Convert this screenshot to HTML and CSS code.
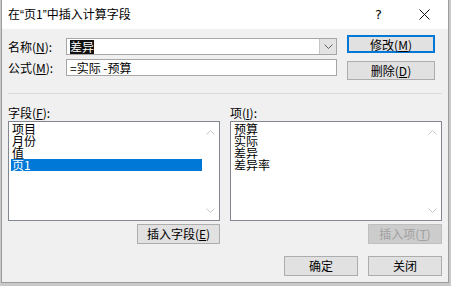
FILE: index.html
```html
<!DOCTYPE html>
<html lang="zh-CN">
<head>
    <meta charset="UTF-8">
    <title>插入计算字段</title>
    <link rel="stylesheet" href="styles.css">
</head>
<body>
    <div class="dialog">
        <div class="titlebar">
            <div class="caption">在<span class="q">“</span>页1<span class="q">”</span>中插入计算字段</div>
            <div class="help">?</div>
            <div class="close">
                <svg width="11" height="11" viewBox="0 0 11 11">
                    <path d="M0.5 0.5 L10.5 10.5 M10.5 0.5 L0.5 10.5" stroke="#111" stroke-width="1" fill="none"/>
                </svg>
            </div>
        </div>

        <div class="top">
            <div class="form">
                <div class="row">
                    <label>名称(<u>N</u>):</label>
                    <div class="combo">
                        <span class="sel">差异</span>
                        <div class="drop">
                            <svg width="9" height="5" viewBox="0 0 9 5">
                                <path d="M0.5 0.5 L4.5 4.5 L8.5 0.5" stroke="#606060" fill="none"/>
                            </svg>
                        </div>
                    </div>
                </div>
                <div class="row">
                    <label>公式(<u>M</u>):</label>
                    <div class="field">=实际 -预算</div>
                </div>
            </div>
            <div class="side">
                <button class="btn default">修改(<u>M</u>)</button>
                <button class="btn tall">删除(<u>D</u>)</button>
            </div>
        </div>

        <div class="sep"></div>

        <div class="lists">
            <div class="col">
                <div class="cap">字段(<u>F</u>):</div>
                <div class="listbox">
                    <div class="items">
                        <div class="item">项目</div>
                        <div class="item">月份</div>
                        <div class="item">值</div>
                        <div class="item active">页1</div>
                    </div>
                    <div class="scroll">
                        <svg width="9" height="5" viewBox="0 0 9 5"><path d="M0.5 4.5 L4.5 0.5 L8.5 4.5" stroke="#c6c6c6" fill="none"/></svg>
                        <svg width="9" height="5" viewBox="0 0 9 5"><path d="M0.5 0.5 L4.5 4.5 L8.5 0.5" stroke="#c6c6c6" fill="none"/></svg>
                    </div>
                </div>
                <div class="under">
                    <button class="btn insert-field">插入字段(<u>E</u>)</button>
                </div>
            </div>
            <div class="col">
                <div class="cap">项(<u>I</u>):</div>
                <div class="listbox">
                    <div class="items">
                        <div class="item">预算</div>
                        <div class="item">实际</div>
                        <div class="item">差异</div>
                        <div class="item">差异率</div>
                    </div>
                    <div class="scroll">
                        <svg width="9" height="5" viewBox="0 0 9 5"><path d="M0.5 4.5 L4.5 0.5 L8.5 4.5" stroke="#c6c6c6" fill="none"/></svg>
                        <svg width="9" height="5" viewBox="0 0 9 5"><path d="M0.5 0.5 L4.5 4.5 L8.5 0.5" stroke="#c6c6c6" fill="none"/></svg>
                    </div>
                </div>
                <div class="under">
                    <button class="btn disabled">插入项(<u>T</u>)</button>
                </div>
            </div>
        </div>

        <div class="footer">
            <button class="btn">确定</button>
            <button class="btn">关闭</button>
        </div>
    </div>
</body>
</html>
```

FILE: styles.css
```css
body {
    margin: 0;
    padding: 0 0 0 1px;
    background-color: #c9c9c9;
    font-family: "Noto Sans CJK SC", "Liberation Sans", sans-serif;
    font-size: 12px;
    color: #000;
}

.dialog {
    width: 446px;
    height: 282px;
    border: 1px solid #9c9c9c;
    border-top: none;
    background-color: #f0f0f0;
    box-sizing: content-box;
}

.titlebar {
    height: 29px;
    background-color: #fff;
    display: flex;
    align-items: center;
    padding-left: 6px;
}

.caption {
    flex: 1;
    font-size: 12px;
    line-height: 14px;
}

.caption .q {
    font-family: "Liberation Sans", sans-serif;
}

.help {
    width: 12px;
    font-size: 13px;
    margin-right: 32px;
    font-family: "DejaVu Sans", sans-serif;
}

.close {
    width: 11px;
    height: 11px;
    margin-right: 18px;
    display: flex;
}

u {
    text-decoration: underline;
    text-underline-offset: 1px;
}

.top {
    display: flex;
    padding: 6px 0 0 6px;
    height: 45px;
}

.form {
    width: 329px;
    padding-top: 3px;
    display: flex;
    flex-direction: column;
    gap: 4px;
}

.row {
    display: flex;
    height: 17px;
    align-items: center;
}

.row label {
    width: 58px;
    line-height: 17px;
}

.combo, .field {
    flex: 1;
    height: 17px;
    box-sizing: border-box;
    border: 1px solid #a6a6a6;
    background: #fff;
    display: flex;
    align-items: center;
    padding-left: 3px;
    line-height: 15px;
}

.combo {
    position: relative;
}

.sel {
    background-color: #111;
    color: #fff;
    line-height: 14px;
}

.drop {
    position: absolute;
    right: 0;
    top: 0;
    width: 16px;
    height: 15px;
    background-color: #e3e3e3;
    border-left: 1px solid #c4c4c4;
    display: flex;
    align-items: center;
    justify-content: center;
}

.side {
    margin-left: 10px;
    display: flex;
    flex-direction: column;
    gap: 8px;
}

.btn {
    font-family: "Noto Sans CJK SC", "Liberation Sans", sans-serif;
    font-size: 12px;
    height: 20px;
    width: 74px;
    padding: 0;
    margin: 0;
    background-color: #e1e1e1;
    border: 1px solid #adadad;
    color: #000;
    line-height: 16px;
}

.side .btn {
    width: 88px;
    height: 18px;
}

.side .btn.tall {
    height: 19px;
}

.btn.default {
    border: 2px solid #0078d7;
}

.btn.disabled {
    color: #a0a0a0;
    background-color: #cccccc;
    border-color: #bfbfbf;
}

.insert-field {
    width: 83px;
}

.sep {
    margin: 13px 6px 0 6px;
    height: 1px;
    background-color: #d9d9d9;
}

.lists {
    display: flex;
    gap: 10px;
    padding: 12px 0 0 6px;
}

.col {
    width: 212px;
    display: flex;
    flex-direction: column;
}

.cap {
    height: 15px;
    line-height: 14px;
}

.listbox {
    height: 100px;
    box-sizing: border-box;
    border: 1px solid #828790;
    background: #fff;
    display: flex;
}

.items {
    flex: 1;
    padding: 1px 0 0 2px;
}

.item {
    height: 12px;
    line-height: 12px;
    padding-left: 1px;
}

.item.active {
    background-color: #0078d7;
    color: #fff;
}

.scroll {
    width: 17px;
    display: flex;
    flex-direction: column;
    justify-content: space-between;
    align-items: center;
    padding: 8px 0 7px;
}

.under {
    display: flex;
    justify-content: flex-end;
    margin-top: 3px;
}

.footer {
    display: flex;
    justify-content: flex-end;
    gap: 10px;
    padding: 12px 6px 0 0;
}
```
